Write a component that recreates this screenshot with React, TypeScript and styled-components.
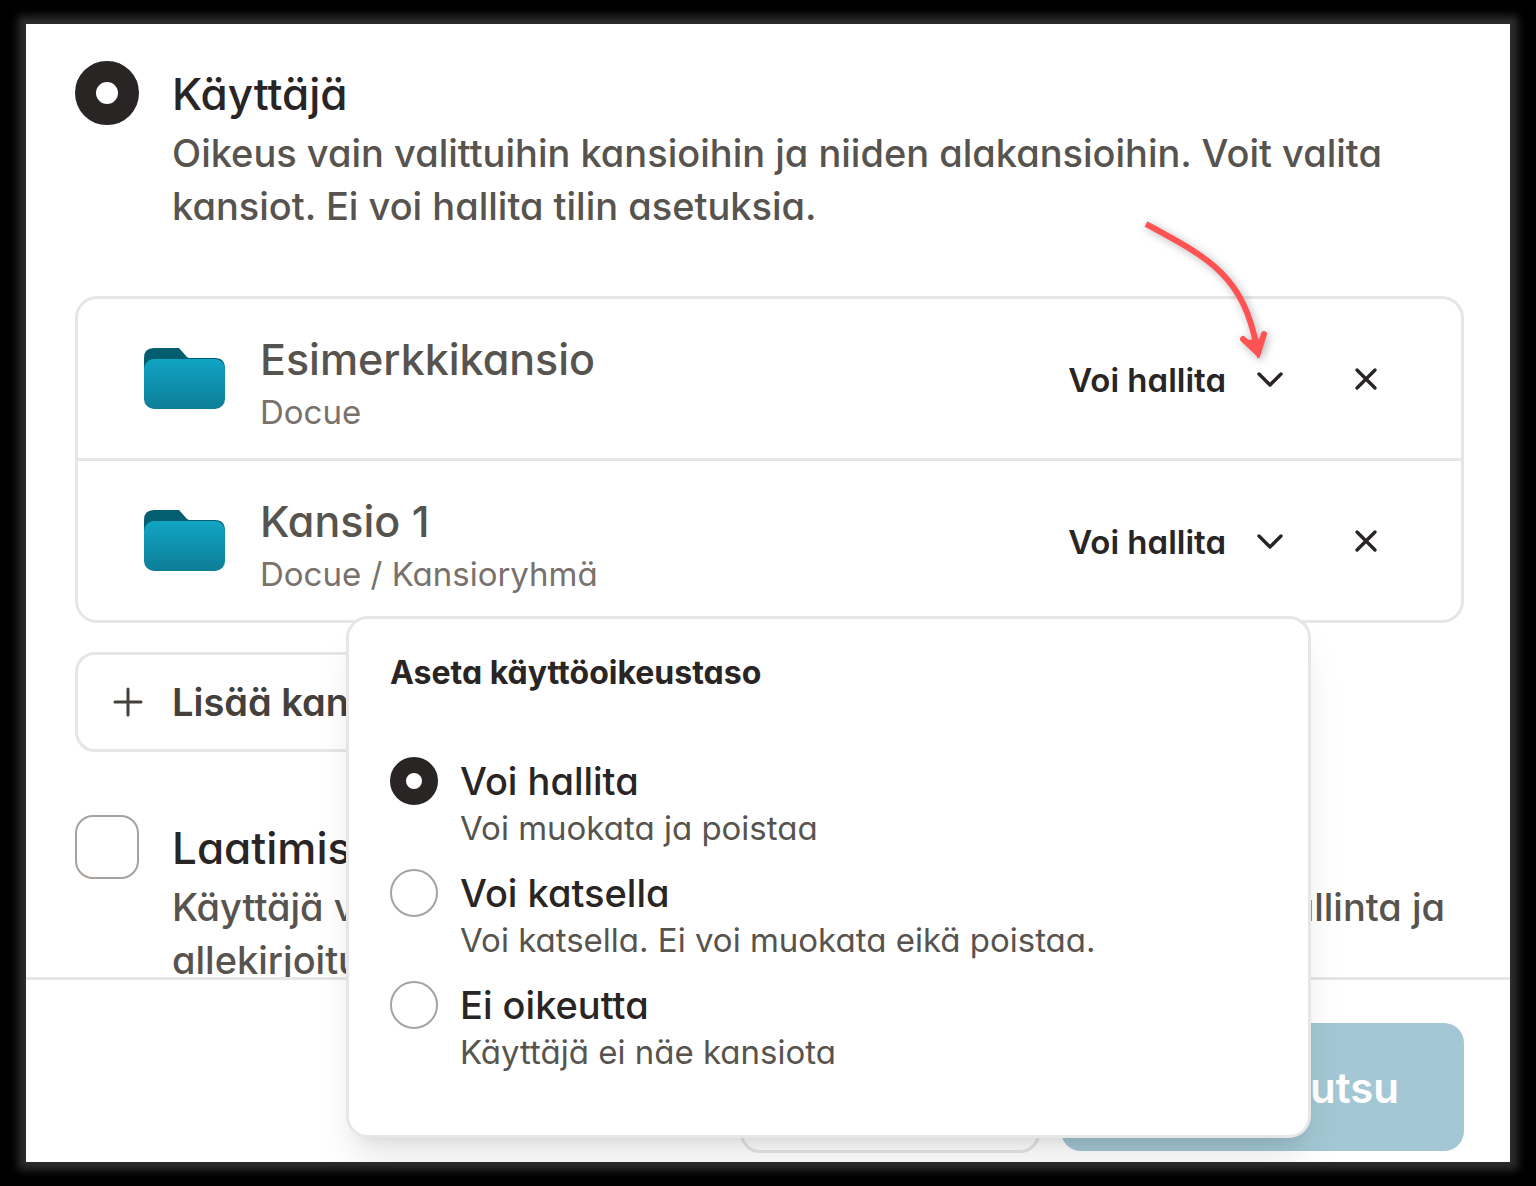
import React, { useState } from "react";
import styled, { createGlobalStyle, css } from "styled-components";

const ink = "#292524";
const body = "#57534e";
const muted = "#78716c";
const line = "#e7e5e5";

const GlobalStyle = createGlobalStyle`
  * { box-sizing: border-box; }
  body {
    margin: 0;
    background: #000;
    color: ${ink};
    font-family: Inter, "Open Sans", sans-serif;
    font-weight: 500;
    font-feature-settings: "cv11" 1;
  }
  button, input { font: inherit; font-feature-settings: inherit; margin: 0; }
`;

const Stage = styled.main`
  height: 100vh;
  padding: 24px 26px;
`;

const Dialog = styled.div`
  display: flex;
  flex-direction: column;
  height: 100%;
  background: #fff;
  box-shadow: 0 0 8px 8px #2d2d2d;
`;

const Clip = styled.div`
  flex: 1;
  display: flex;
  flex-direction: column;
  min-height: 0;
  overflow: hidden;
  position: relative;
`;

const Content = styled.div`
  flex: 1;
  min-height: 0;
  overflow: hidden;
  padding: 37px 46px 0 49px;
`;

const mark = css`
  appearance: none;
  flex: none;
  background: #fff;
  border: 2px solid #a8a29e;
`;

const Radio = styled.input.attrs({ type: "radio" })<{ $size: number }>`
  ${mark}
  width: ${(p) => p.$size}px;
  height: ${(p) => p.$size}px;
  border-radius: 50%;
  &:checked {
    border: ${(p) => Math.floor(p.$size / 3)}px solid ${ink};
  }
`;

const Checkbox = styled.input.attrs({ type: "checkbox" })`
  ${mark}
  width: 64px;
  height: 64px;
  border-radius: 18px;
  &:checked { background: ${ink}; }
`;

const Choice = styled.label<{ $gap: number }>`
  display: flex;
  align-items: flex-start;
  gap: ${(p) => p.$gap}px;
`;

const RoleTitle = styled.span`
  display: block;
  font-size: 44px;
  line-height: 66px;
`;

const RoleText = styled.span`
  display: block;
  font-size: 38px;
  line-height: 53px;
  color: ${body};
`;

const FolderList = styled.ul`
  list-style: none;
  margin: 63px 0 29px;
  padding: 0;
  border: 3px solid ${line};
  border-radius: 22px;
`;

const FolderRow = styled.li`
  display: flex;
  align-items: center;
  gap: 35px;
  padding: 28px 69px 25px 66px;
  & + & { border-top: 3px solid ${line}; }
`;

const FolderText = styled.div`
  flex: 1;
`;

const FolderName = styled.div`
  font-size: 43px;
  line-height: 64px;
  color: ${body};
`;

const FolderPath = styled.div`
  font-size: 33px;
  font-weight: 400;
  line-height: 42px;
  color: ${muted};
`;

const Plain = styled.button`
  display: flex;
  align-items: center;
  gap: 28px;
  padding: 0;
  border: 0;
  background: none;
  color: ${ink};
  font-size: 33px;
  font-weight: 600;
  line-height: 44px;
`;

const Actions = styled.div`
  display: flex;
  align-items: center;
  gap: 54px;
`;

const AddButton = styled.button`
  display: flex;
  align-items: center;
  gap: 28px;
  height: 100px;
  margin-bottom: 63px;
  padding: 0 34px;
  border: 3px solid ${line};
  border-radius: 20px;
  background: #fff;
  color: #44403c;
  font-size: 38px;
  font-weight: 600;
`;

const Footer = styled.footer`
  display: flex;
  justify-content: flex-end;
  gap: 21px;
  padding: 43px 46px 9px;
  border-top: 3px solid ${line};
`;

const FooterButton = styled.button`
  height: 130px;
  padding: 0 68px;
  border: 3px solid ${line};
  border-radius: 20px;
  background: #fff;
  color: #44403c;
  font-size: 42px;
  font-weight: 500;
`;

const PrimaryButton = styled(FooterButton)`
  height: 128px;
  padding: 0 65px 0 73px;
  border: 0;
  background: #a3c7d4;
  color: #fff;
  font-weight: 600;
`;

const Popover = styled.div`
  position: absolute;
  top: 592px;
  right: 199px;
  width: 965px;
  padding: 32px 41px 60px;
  border: 3px solid ${line};
  border-radius: 22px;
  background: #fff;
  box-shadow: 0 27px 40px -8px rgba(0, 0, 0, 0.1), 0 11px 16px -11px rgba(0, 0, 0, 0.1);
`;

const PopoverTitle = styled.h2`
  margin: 0 0 62px;
  font-size: 32px;
  font-weight: 700;
  line-height: 44px;
`;

const Levels = styled.div`
  display: flex;
  flex-direction: column;
  gap: 18px;
`;

const LevelTitle = styled.span`
  display: block;
  font-size: 38px;
  line-height: 48px;
`;

const LevelText = styled.span`
  display: block;
  font-size: 33px;
  font-weight: 400;
  line-height: 46px;
  color: ${body};
`;

const Pointer = styled.svg`
  position: absolute;
  top: 190px;
  right: 234px;
  filter: drop-shadow(2px 2px 4px rgba(0, 0, 0, 0.3));
  pointer-events: none;
`;

const FolderIcon = ({ id }: { id: string }) => (
  <svg width="81" height="64" viewBox="0 1 81 64" aria-hidden="true">
    <defs>
      <linearGradient id={id} x1="0" y1="0" x2="0" y2="1">
        <stop offset="0" stopColor="#10a5c4" />
        <stop offset="1" stopColor="#0d7d97" />
      </linearGradient>
    </defs>
    <path d="M0 11Q0 1 10 1H35L43 10Q44 11 46 11H71Q81 11 81 22V40H0Z" fill="#035f70" />
    <rect y="12" width="81" height="50" rx="10" fill={`url(#${id})`} />
  </svg>
);

const Chevron = () => (
  <svg width="32" height="32" viewBox="0 0 32 32" fill="none" stroke="currentColor" strokeWidth="3.4" strokeLinecap="round" strokeLinejoin="round" aria-hidden="true">
    <path d="M5 10L16 21L27 10" />
  </svg>
);

const Cross = () => (
  <svg width="52" height="32" viewBox="0 0 52 32" fill="none" stroke="currentColor" strokeWidth="3.4" strokeLinecap="round" aria-hidden="true">
    <path d="M17 6L35 24M35 6L17 24" />
  </svg>
);

const Plus = () => (
  <svg width="32" height="32" viewBox="0 0 32 32" fill="none" stroke="currentColor" strokeWidth="3" strokeLinecap="round" aria-hidden="true">
    <path d="M16 3V29M3 16H29" />
  </svg>
);

const folders = [
  { name: "Esimerkkikansio", path: "Docue" },
  { name: "Kansio 1", path: "Docue / Kansioryhmä" },
];

const levels = [
  { title: "Voi hallita", text: "Voi muokata ja poistaa" },
  { title: "Voi katsella", text: "Voi katsella. Ei voi muokata eikä poistaa." },
  { title: "Ei oikeutta", text: "Käyttäjä ei näe kansiota" },
];

export default function App() {
  const [level, setLevel] = useState(0);
  return (
    <Stage>
      <GlobalStyle />
      <Dialog>
        <Clip>
          <Content>
            <Choice $gap={33}>
              <Radio name="role" $size={64} defaultChecked />
              <span>
                <RoleTitle>Käyttäjä</RoleTitle>
                <RoleText>
                  Oikeus vain valittuihin kansioihin ja niiden alakansioihin. Voit valita kansiot. Ei voi hallita tilin asetuksia.
                </RoleText>
              </span>
            </Choice>
            <FolderList>
              {folders.map((f, i) => (
                <FolderRow key={f.name}>
                  <FolderIcon id={`folder-${i}`} />
                  <FolderText>
                    <FolderName>{f.name}</FolderName>
                    <FolderPath>{f.path}</FolderPath>
                  </FolderText>
                  <Actions>
                    <Plain type="button" aria-haspopup="dialog">
                      Voi hallita
                      <Chevron />
                    </Plain>
                    <Plain type="button" aria-label="Poista">
                      <Cross />
                    </Plain>
                  </Actions>
                </FolderRow>
              ))}
            </FolderList>
            <AddButton type="button">
              <Plus />
              Lisää kansio
            </AddButton>
            <Choice $gap={33}>
              <Checkbox />
              <span>
                <RoleTitle>Laatimisoikeus</RoleTitle>
                <RoleText>
                  Käyttäjä voi laatia uusia asiakirjoja. Oikeuksiin kuuluu myös hallinta ja allekirjoitus.
                </RoleText>
              </span>
            </Choice>
          </Content>
          <Footer>
            <FooterButton type="button">Peruuta</FooterButton>
            <PrimaryButton type="button">Lähetä kutsu</PrimaryButton>
          </Footer>
          <Popover role="dialog" aria-labelledby="level-title">
            <PopoverTitle id="level-title">Aseta käyttöoikeustaso</PopoverTitle>
            <Levels>
              {levels.map((l, i) => (
                <Choice key={l.title} $gap={22}>
                  <Radio name="level" $size={48} checked={level === i} onChange={() => setLevel(i)} />
                  <span>
                    <LevelTitle>{l.title}</LevelTitle>
                    <LevelText>{l.text}</LevelText>
                  </span>
                </Choice>
              ))}
            </Levels>
          </Popover>
          <Pointer width="140" height="155" viewBox="0 0 140 155" fill="none" stroke="#ff5353" strokeWidth="6" aria-hidden="true">
            <path d="M10 10C75 45 107 62 121 134" />
            <path d="M107 125L122 139L128 120" strokeLinecap="round" strokeLinejoin="miter" />
            <path d="M112 126L122 145L127 124Z" fill="#ff5353" stroke="none" />
          </Pointer>
        </Clip>
      </Dialog>
    </Stage>
  );
}
